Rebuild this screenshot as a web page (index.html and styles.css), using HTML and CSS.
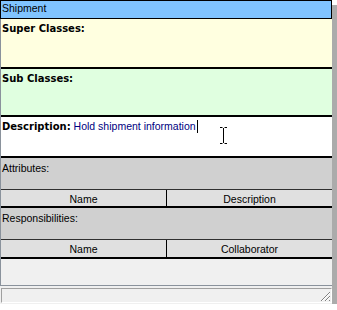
FILE: index.html
```html
<!DOCTYPE html>
<html lang="en">
<head>
    <meta charset="UTF-8">
    <title>Shipment</title>
    <link rel="stylesheet" href="styles.css">
</head>
<body>

<div class="window">
    <!-- Class name bar -->
    <div class="title">Shipment</div>

    <div class="box">
        <div class="section super"><b>Super Classes:</b></div>
        <div class="section sub"><b>Sub Classes:</b></div>
        <div class="section desc"><b>Description:</b> <span class="value">Hold shipment information</span><span class="caret"></span></div>

        <div class="section list">Attributes:</div>
        <div class="cols first">
            <div>Name</div>
            <div>Description</div>
        </div>

        <div class="section list">Responsibilities:</div>
        <div class="cols">
            <div>Name</div>
            <div>Collaborator</div>
        </div>

        <div class="filler"></div>
    </div>

    <!-- Status bar with resize grip -->
    <div class="status">
        <svg class="grip" width="11" height="11" viewBox="0 0 11 11">
            <path d="M10 1 L1 10 M10 5 L5 10 M10 9 L9 10" stroke="#808080" stroke-width="1"/>
            <path d="M10 2 L2 10 M10 6 L6 10" stroke="#ffffff" stroke-width="1"/>
        </svg>
    </div>
</div>

<!-- Mouse I-beam over the description -->
<svg class="ibeam" width="9" height="17" viewBox="0 0 9 17">
    <path d="M1 0.5 H3.5 M5.5 0.5 H8 M4.5 1 V16 M1 16.5 H3.5 M5.5 16.5 H8" stroke="#000" stroke-width="1" fill="none"/>
</svg>

</body>
</html>
```

FILE: styles.css
```css
body {
    margin: 0;
    padding: 0;
    background-color: #ffffff;
    font-family: "Liberation Sans", Arial, sans-serif;
    font-size: 10.5px;
    line-height: 12px;
    color: #000;
}
.window {
    width: 332px;
    height: 304px;
    background-color: #f0f0f0;
    box-shadow: 5px 5px 0 #ababab;
    display: flex;
    flex-direction: column;
}
.title {
    height: 19px;
    box-sizing: border-box;
    border: 1px solid #000;
    background-color: #80c4ff;
    padding: 1px 1px;
}
.box {
    display: flex;
    flex-direction: column;
    border-left: 1px solid #8a929c;
    border-bottom: 1px solid #8a929c;
    height: 267px;
    box-sizing: border-box;
}
.section {
    box-sizing: border-box;
    padding: 3px 1px 0;
    border-bottom: 2px solid #000;
}
.section b {
    font-family: "DejaVu Sans", Verdana, sans-serif;
    font-size: 10px;
    font-weight: bold;
}
.super {
    height: 50px;
    background-color: #ffffe0;
}
.sub {
    height: 48px;
    background-color: #e0ffe0;
}
.desc {
    height: 41px;
    background-color: #ffffff;
}
.value {
    color: #000080;
}
.caret {
    display: inline-block;
    width: 1px;
    height: 13px;
    margin-left: 1px;
    background-color: #000;
    vertical-align: -3px;
}
.list {
    height: 32px;
    padding-top: 4px;
    background-color: #d0d0d0;
    border-bottom: 1px solid #303030;
}
.cols {
    display: flex;
    height: 19px;
    box-sizing: border-box;
    background-color: #e0e0e0;
    border-bottom: 2px solid #000;
}
.cols.first {
    height: 18px;
}
.cols div {
    flex: 1;
    text-align: center;
    padding-top: 3px;
}
.cols div:first-child {
    border-right: 1px solid #000;
}
.filler {
    flex: 1;
    background-color: #f0f0f0;
}
.status {
    margin: 2px 0 1px 1px;
    height: 15px;
    box-sizing: border-box;
    border: 1px solid;
    border-color: #a0a0a0 #ffffff #ffffff #a0a0a0;
    background-color: #f0f0f0;
    display: flex;
    justify-content: flex-end;
    align-items: flex-end;
}
.grip {
    display: block;
}
.ibeam {
    position: absolute;
    left: 219px;
    top: 127px;
}
```
